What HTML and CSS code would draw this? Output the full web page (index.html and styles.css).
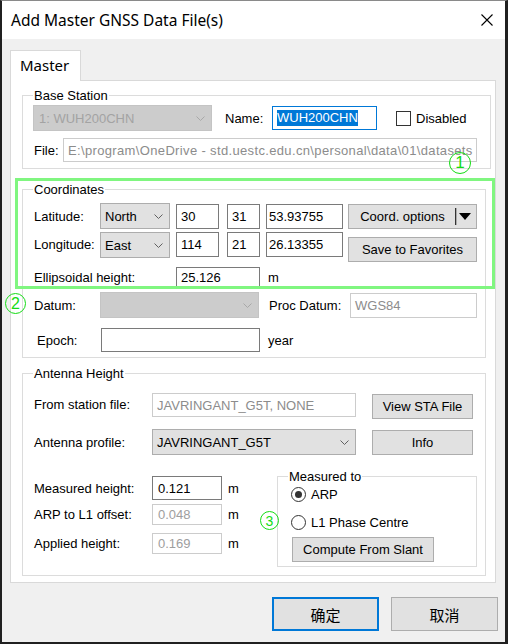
FILE: index.html
```html
<!DOCTYPE html>
<html>
<head>
<meta charset="utf-8">
<title>Add Master GNSS Data File(s)</title>
<link rel="stylesheet" href="styles.css">
</head>
<body>
<div class="window">
  <div class="titlebar">
    <span class="title">Add Master GNSS Data File(s)</span>
    <svg class="close" width="12" height="12" viewBox="0 0 12 12"><path d="M0.5 0.5L11.5 11.5M11.5 0.5L0.5 11.5" stroke="#000" stroke-width="1.1" fill="none"/></svg>
  </div>
  <div class="client">
    <div class="tabstrip"><div class="tab">Master</div></div>
    <div class="tabpage">
      <fieldset class="group g-base">
        <legend>Base Station</legend>
        <div class="row">
          <div class="combo dis w-station"><span>1: WUH200CHN</span><svg class="chev" width="9" height="5" viewBox="0 0 9 5"><path d="M0.5 0.5L4.5 4.5L8.5 0.5" fill="none" stroke="currentColor"/></svg></div>
          <span class="lbl l-name">Name:</span>
          <div class="tb focus w-name"><span class="sel">WUH200CHN</span></div>
          <span class="check"></span>
          <span class="lbl l-dis">Disabled</span>
        </div>
        <div class="row r-file">
          <span class="lbl l-file">File:</span>
          <div class="tb dis w-file">E:\program\OneDrive - std.uestc.edu.cn\personal\data\01\datasets</div>
        </div>
      </fieldset>

      <fieldset class="group g-coord">
        <legend>Coordinates</legend>
        <div class="row r-lat">
          <span class="lbl l-coord">Latitude:</span>
          <div class="combo w-hemi"><span>North</span><svg class="chev" width="9" height="5" viewBox="0 0 9 5"><path d="M0.5 0.5L4.5 4.5L8.5 0.5" fill="none" stroke="currentColor"/></svg></div>
          <div class="tb h25 w-deg">30</div>
          <div class="tb h25 w-min">31</div>
          <div class="tb h25 w-sec">53.93755</div>
          <button class="btn w-opt split"><span class="btxt">Coord. options</span><span class="sep"></span><svg class="tri" width="12" height="7" viewBox="0 0 12 7"><path d="M0 0H12L6 7Z" fill="#000"/></svg></button>
        </div>
        <div class="row top r-lon">
          <span class="lbl l-coord tall">Longitude:</span>
          <div class="combo w-hemi"><span>East</span><svg class="chev" width="9" height="5" viewBox="0 0 9 5"><path d="M0.5 0.5L4.5 4.5L8.5 0.5" fill="none" stroke="currentColor"/></svg></div>
          <div class="tb h25 w-deg">114</div>
          <div class="tb h25 w-min">21</div>
          <div class="tb h25 w-sec">26.13355</div>
          <button class="btn w-opt fav">Save to Favorites</button>
        </div>
        <div class="row r-ell">
          <span class="lbl l-ell">Ellipsoidal height:</span>
          <div class="tb h21 w-ell">25.126</div>
          <span class="lbl unit-c">m</span>
        </div>
        <div class="row r-datum">
          <span class="lbl l-coord">Datum:</span>
          <div class="combo dis h25 w-datum"><span></span><svg class="chev" width="9" height="5" viewBox="0 0 9 5"><path d="M0.5 0.5L4.5 4.5L8.5 0.5" fill="none" stroke="currentColor"/></svg></div>
          <span class="lbl l-proc">Proc Datum:</span>
          <div class="tb dis h25 w-proc">WGS84</div>
        </div>
        <div class="row r-epoch">
          <span class="lbl l-epoch">Epoch:</span>
          <div class="tb w-epoch"></div>
          <span class="lbl unit-c">year</span>
        </div>
      </fieldset>

      <fieldset class="group g-ant">
        <legend>Antenna Height</legend>
        <div class="row top r-sta">
          <span class="lbl l-ant tall24">From station file:</span>
          <div class="tb dis w-prof">JAVRINGANT_G5T, NONE</div>
          <button class="btn w-sta sta">View STA File</button>
        </div>
        <div class="row r-prof">
          <span class="lbl l-ant">Antenna profile:</span>
          <div class="combo w-prof"><span>JAVRINGANT_G5T</span><svg class="chev" width="9" height="5" viewBox="0 0 9 5"><path d="M0.5 0.5L4.5 4.5L8.5 0.5" fill="none" stroke="currentColor"/></svg></div>
          <button class="btn w-sta h26">Info</button>
        </div>
        <div class="lower">
          <div class="hcol">
            <div class="row">
              <span class="lbl l-ant">Measured height:</span>
              <div class="tb w-h">0.121</div>
              <span class="lbl unit-a">m</span>
            </div>
            <div class="row r-h2">
              <span class="lbl l-ant">ARP to L1 offset:</span>
              <div class="tb dis faint h21 w-h">0.048</div>
              <span class="lbl unit-a">m</span>
            </div>
            <div class="row r-h3">
              <span class="lbl l-ant">Applied height:</span>
              <div class="tb dis faint h21 w-h">0.169</div>
              <span class="lbl unit-a">m</span>
            </div>
          </div>
          <fieldset class="group g-meas">
            <legend>Measured to</legend>
            <div class="row r-rad1"><span class="radio on"></span><span class="lbl l-rad">ARP</span></div>
            <div class="row r-rad2"><span class="radio"></span><span class="lbl l-rad">L1 Phase Centre</span></div>
            <button class="btn h26 w-slant">Compute From Slant</button>
          </fieldset>
        </div>
      </fieldset>
    </div>
    <div class="footer">
      <button class="btn dlg default">确定</button>
      <button class="btn dlg">取消</button>
    </div>
  </div>

  <div class="ann-box"></div>
  <span class="ann ann1">1</span>
  <span class="ann ann2">2</span>
  <span class="ann ann3">3</span>
</div>
</body>
</html>
```

FILE: styles.css
```css
* { box-sizing: border-box; }
html, body { margin: 0; padding: 0; }
body {
  width: 508px; height: 644px; overflow: hidden;
  background: #202020;
  font-family: "Liberation Sans", Arial, sans-serif;
  font-size: 13px; color: #000;
}
.window {
  position: relative;
  width: 508px; height: 644px;
  border-style: solid;
  border-width: 1px 3px 2px 2px;
  border-color: #8a8a8a #202020 #202020 #202020;
  background: #f0f0f0;
  display: flex; flex-direction: column;
}
.titlebar {
  flex: none; height: 38px; background: #fff;
  display: flex; align-items: center; justify-content: space-between;
  padding: 0 12px 0 9px;
}
.title { font-family: "Noto Sans", sans-serif; font-size: 15.5px; line-height: 20px; color: #000; }
.close { display: block; }
.client { flex: 1; padding: 11px 0 0 8px; display: flex; flex-direction: column; }
.tabstrip { height: 30px; display: flex; }
.tab {
  position: relative; z-index: 1;
  width: 71px; height: 31px;
  border: 1px solid #d9d9d9; border-bottom: 0;
  background: #fff;
  font-family: "Noto Sans", sans-serif; font-size: 15px; line-height: 29px;
  padding-left: 9px;
}
.tabpage { width: 486px; height: 503px; border: 1px solid #d9d9d9; background: #fff; }

.group { margin: 0 0 0 11px; border: 1px solid #dcdcdc; padding: 0 0 0 10px; min-width: 0; }
.group legend { padding: 0 1px; line-height: 15px; font-size: 13px; }
.g-base { width: 469px; margin-top: 7px; padding-top: 2px; padding-bottom: 6px; }
.g-coord { width: 464px; margin-top: 13px; padding-top: 6px; padding-bottom: 5px; }
.g-ant { width: 464px; margin-top: 8px; padding-top: 12px; padding-bottom: 8px; }
.g-meas { margin: 0; width: 200px; padding: 3px 0 4px 10px; }

.row { display: flex; align-items: center; }
.row.top { align-items: flex-start; }
.lbl { white-space: nowrap; line-height: 15px; flex: none; }
.tall { line-height: 26px; }
.tall24 { line-height: 24px; }

.tb {
  flex: none; height: 24px;
  border: 1px solid #7a7a7a; background: #fff;
  display: flex; align-items: center;
  padding-left: 4px; white-space: nowrap; overflow: hidden;
}
.tb.dis { border-color: #cccccc; color: #8c8c8c; }
.tb.faint { color: #9e9e9e; }
.tb.focus { border-color: #0078d7; }
.sel { background: #0078d7; color: #fff; line-height: 16px; }
.h25 { height: 25px; }
.h21 { height: 21px; }
.h26 { height: 26px; }

.combo {
  flex: none; height: 26px;
  border: 1px solid #adadad; background: #e1e1e1; color: #000;
  display: flex; align-items: center; justify-content: space-between;
  padding: 0 6px 0 4px; white-space: nowrap;
}
.combo .chev { color: #606060; flex: none; }
.combo.dis { background: #cccccc; border-color: #c4c4c4; color: #a3a3a3; padding-left: 5px; }
.combo.dis .chev { color: #a8a8a8; }

.btn {
  flex: none; height: 25px; padding: 0; margin: 0;
  font-family: inherit; font-size: 13px; color: #000;
  border: 1px solid #adadad; background: #e1e1e1;
  display: flex; align-items: center; justify-content: center;
}

/* base station */
.w-station { width: 179px; }
.l-name { margin-left: 13px; width: 47px; }
.w-name { width: 105px; }
.check { flex: none; width: 15px; height: 15px; border: 1px solid #333; background: #fff; margin-left: 19px; }
.l-dis { margin-left: 5px; }
.r-file { margin-top: 7px; }
.l-file { width: 30px; padding-left: 1px; }
.w-file { width: 414px; color: #6d6d6d; letter-spacing: 0.35px; }

/* coordinates */
.l-coord { width: 67px; padding-left: 1px; }
.w-hemi { width: 70px; }
.w-deg { width: 43px; margin-left: 6px; }
.w-min { width: 33px; margin-left: 8px; }
.w-sec { width: 77px; margin-left: 6px; padding-left: 2px; }
.w-opt { width: 129px; margin-left: 5px; }
.split { justify-content: flex-start; }
.split .btxt { flex: 1; text-align: center; padding-left: 1px; }
.sep { width: 2px; height: 17px; border-left: 1px solid #333; border-right: 1px solid #aaa; flex: none; }
.tri { margin: 0 5px 0 2px; flex: none; }
.r-lon { margin-top: 3px; }
.fav { margin-top: 5px; }
.r-ell { margin-top: 5px; }
.l-ell { width: 143px; padding-left: 1px; }
.w-ell { width: 84px; }
.unit-c { margin-left: 8px; }
.r-datum { margin-top: 4px; }
.w-datum { width: 159px; }
.l-proc { margin-left: 10px; width: 81px; }
.w-proc { width: 127px; }
.r-epoch { margin-top: 10px; }
.l-epoch { width: 68px; padding-left: 4px; }
.w-epoch { width: 159px; }

/* antenna */
.l-ant { width: 119px; padding-left: 1px; }
.w-prof { width: 204px; }
.w-sta { width: 101px; margin-left: 16px; }
.sta { margin-top: 1px; }
.r-prof { margin-top: 10px; }
.lower { display: flex; align-items: flex-start; margin-top: 14px; }
.hcol { width: 244px; padding-top: 7px; flex: none; }
.w-h { width: 70px; padding-left: 5px; }
.unit-a { margin-left: 6px; }
.r-h2 { margin-top: 4px; }
.r-h3 { margin-top: 8px; }

.radio {
  flex: none; width: 15px; height: 15px; border-radius: 50%;
  border: 1px solid #333; background: #fff; margin-left: 3px;
  display: flex; align-items: center; justify-content: center;
}
.radio.on::after { content: ""; width: 7px; height: 7px; border-radius: 50%; background: #333; }
.l-rad { margin-left: 5px; }
.r-rad2 { margin-top: 13px; }
.w-slant { width: 142px; margin-top: 7px; margin-left: 4px; }

/* footer */
.footer { display: flex; justify-content: flex-end; gap: 12px; margin-top: 14px; padding-right: 7px; }
.dlg { width: 107px; height: 34px; font-family: "Noto Sans CJK SC", "Liberation Sans", sans-serif; font-size: 15px; }
.dlg.default { border: 2px solid #0078d7; }

/* annotations */
.ann-box {
  position: absolute; left: 13px; top: 177px;
  width: 480px; height: 111px;
  border: 3px solid #80f680;
}
.ann {
  position: absolute;
  border: 1.5px solid #14dc14; border-radius: 50%;
  color: #14dc14;
  display: flex; align-items: center; justify-content: center;
  font-family: "Liberation Sans", Arial, sans-serif;
}
.ann1 { left: 447px; top: 151px; width: 22px; height: 22px; font-size: 17px; }
.ann2 { left: 3px; top: 292px; width: 21px; height: 21px; font-size: 16px; }
.ann3 { left: 258px; top: 510px; width: 19px; height: 19px; font-size: 14px; }
```
